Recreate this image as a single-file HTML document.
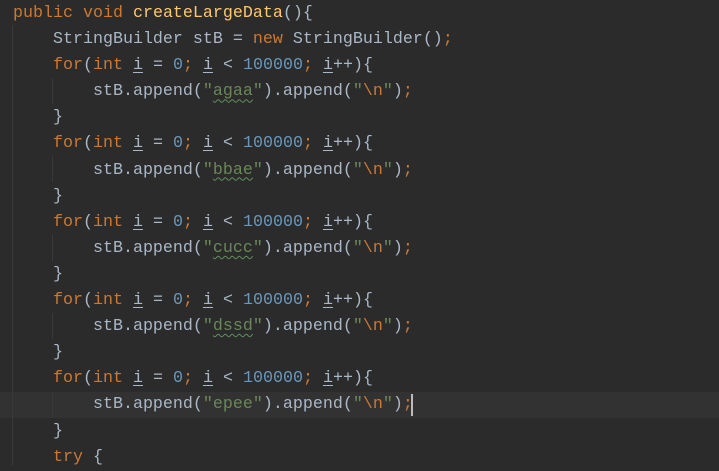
<!DOCTYPE html>
<html><head><style>
html,body{margin:0;padding:0;background:#2b2b2b;width:719px;height:466px;overflow:hidden}
pre{margin:0;position:absolute;left:13px;top:1px;font-family:"Liberation Mono",monospace;font-size:16.67px;line-height:26.1px;color:#a9b7c6;white-space:pre}
.k{color:#cc7832}.f{color:#ffc66d}.n{color:#6897bb}.s{color:#6a8759}.e{color:#cc7832}
.u{text-decoration:underline;text-underline-offset:3px}
.w{text-decoration:underline wavy #5f8f5f;text-decoration-thickness:1px;text-underline-offset:3px}
.cur{position:absolute;left:0;top:392px;width:719px;height:26px;background:#323232}
.g{position:absolute;width:1px;background:#393939}
.caret{position:absolute;left:411px;top:394px;width:2px;height:22px;background:#bbbbbb}
</style></head><body>
<div class="cur"></div>
<div class="g" style="left:12px;top:25px;height:441px"></div>
<div class="g" style="left:52px;top:78px;height:26px"></div>
<div class="g" style="left:52px;top:156px;height:26px"></div>
<div class="g" style="left:52px;top:235px;height:26px"></div>
<div class="g" style="left:52px;top:313px;height:26px"></div>
<div class="g" style="left:52px;top:392px;height:26px"></div>
<pre><span class="k">public void </span><span class="f">createLargeData</span>(){
    StringBuilder stB = <span class="k">new </span>StringBuilder()<span class="k">;</span>
    <span class="k">for</span>(<span class="k">int </span><span class="u">i</span> = <span class="n">0</span><span class="k">; </span><span class="u">i</span> &lt; <span class="n">100000</span><span class="k">; </span><span class="u">i</span>++){
        stB.append(<span class="s">"<span class="w">agaa</span>"</span>).append(<span class="s">"<span class="e">\n</span>"</span>)<span class="k">;</span>
    }
    <span class="k">for</span>(<span class="k">int </span><span class="u">i</span> = <span class="n">0</span><span class="k">; </span><span class="u">i</span> &lt; <span class="n">100000</span><span class="k">; </span><span class="u">i</span>++){
        stB.append(<span class="s">"<span class="w">bbae</span>"</span>).append(<span class="s">"<span class="e">\n</span>"</span>)<span class="k">;</span>
    }
    <span class="k">for</span>(<span class="k">int </span><span class="u">i</span> = <span class="n">0</span><span class="k">; </span><span class="u">i</span> &lt; <span class="n">100000</span><span class="k">; </span><span class="u">i</span>++){
        stB.append(<span class="s">"<span class="w">cucc</span>"</span>).append(<span class="s">"<span class="e">\n</span>"</span>)<span class="k">;</span>
    }
    <span class="k">for</span>(<span class="k">int </span><span class="u">i</span> = <span class="n">0</span><span class="k">; </span><span class="u">i</span> &lt; <span class="n">100000</span><span class="k">; </span><span class="u">i</span>++){
        stB.append(<span class="s">"<span class="w">dssd</span>"</span>).append(<span class="s">"<span class="e">\n</span>"</span>)<span class="k">;</span>
    }
    <span class="k">for</span>(<span class="k">int </span><span class="u">i</span> = <span class="n">0</span><span class="k">; </span><span class="u">i</span> &lt; <span class="n">100000</span><span class="k">; </span><span class="u">i</span>++){
        stB.append(<span class="s">"epee"</span>).append(<span class="s">"<span class="e">\n</span>"</span>)<span class="k">;</span>
    }
    <span class="k">try </span>{
</pre>
<div class="caret"></div>
</body></html>
